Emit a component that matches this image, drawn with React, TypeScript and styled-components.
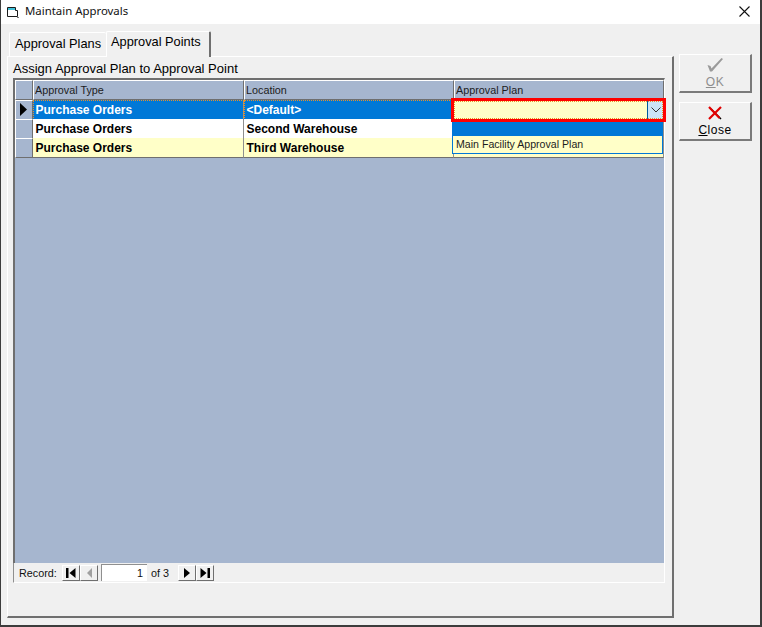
import React from 'react';
import styled, { createGlobalStyle } from 'styled-components';

const GlobalStyle = createGlobalStyle`
  html, body {
    margin: 0;
    padding: 0;
    background: #f0f0f0;
  }
`;

const Win = styled.div`
  box-sizing: border-box;
  width: 762px;
  height: 627px;
  display: flex;
  flex-direction: column;
  border-left: 1px solid #3c3c3c;
  border-right: 2px solid #3c3c3c;
  border-bottom: 2px solid #3c3c3c;
  background: #f0f0f0;
  font-family: "Liberation Sans", Arial, sans-serif;
  color: #000;
  overflow: hidden;
`;

const TitleBar = styled.div`
  height: 24px;
  flex: none;
  background: #fff;
  display: flex;
  align-items: center;
  padding-left: 5px;
  font-family: "Noto Sans", "Open Sans", sans-serif;
  font-size: 11.4px;
`;

const TitleText = styled.span`
  margin-left: 5px;
  margin-top: -3px;
  color: #111;
`;

const CloseX = styled.svg`
  margin-left: auto;
  margin-right: 10px;
  margin-top: -2px;
`;

const Body = styled.div`
  flex: 1;
  display: flex;
  padding: 7px 0 7px 6px;
  min-height: 0;
`;

const TabArea = styled.div`
  width: 667px;
  flex: none;
  display: flex;
  flex-direction: column;
`;

const TabRow = styled.div`
  height: 25px;
  flex: none;
  display: flex;
  align-items: flex-end;
  padding-left: 2px;
`;

const Tab = styled.div<{ $active?: boolean }>`
  box-sizing: border-box;
  font-size: 12.8px;
  height: ${p => (p.$active ? 26 : 24)}px;
  width: ${p => (p.$active ? 105 : 97)}px;
  padding: ${p => (p.$active ? '2px 0 0 4px' : '3px 0 0 5px')};
  border-top: 1px solid #fff;
  border-left: 1px solid #fff;
  border-right: ${p => (p.$active ? '2px solid #6f6f6f' : '0')};
  border-radius: 2px 2px 0 0;
  margin-bottom: ${p => (p.$active ? -1 : 0)}px;
  position: relative;
  background: #f0f0f0;
  white-space: nowrap;
`;

const TabPage = styled.div`
  box-sizing: border-box;
  flex: 1;
  border-top: 1px solid #fff;
  border-left: 1px solid #fff;
  border-right: 2px solid #6f6f6f;
  border-bottom: 2px solid #6f6f6f;
  padding: 4px 6px 0 5px;
  display: flex;
  flex-direction: column;
`;

const Caption = styled.div`
  font-size: 13px;
  line-height: 16px;
  height: 17px;
  white-space: nowrap;
`;

const GridFrame = styled.div`
  box-sizing: border-box;
  width: 652px;
  height: 485px;
  flex: none;
  background: #a6b6cf;
  border-top: 2px solid #6f6f6f;
  border-left: 2px solid #6f6f6f;
  border-right: 1px solid #fff;
  position: relative;
`;

const Row = styled.div`
  display: grid;
  grid-template-columns: 18px 211px 210px 1fr;
  height: 19px;
`;

const HeaderRow = styled(Row)`
  height: 20px;
`;

const HeadCell = styled.div`
  box-sizing: border-box;
  border-top: 1px solid #fff;
  border-left: 1px solid #fff;
  border-right: 1px solid #6f6f6f;
  border-bottom: 1px solid #6f6f6f;
  background: #a6b6cf;
  font-size: 10.8px;
  color: #1c1c1c;
  padding: 3px 0 0 1px;
  white-space: nowrap;
  overflow: hidden;
`;

const RowSelector = styled(HeadCell)`
  padding: 3px 0 0 4px;
`;

const Cell = styled.div<{ $bg: string; $fg?: string; $focus?: boolean }>`
  box-sizing: border-box;
  background: ${p => p.$bg};
  color: ${p => p.$fg ?? '#000'};
  font-size: 12px;
  font-weight: bold;
  line-height: 18px;
  padding: 1px 0 0 2.5px;
  border-right: 1px solid #8f8f8f;
  border-bottom: 1px solid ${p => (p.$focus ? '#e8902a' : '#6f6f6f')};
  white-space: nowrap;
  ${p => p.$focus && 'outline: 1px dotted #e8902a; outline-offset: -1px;'}
`;

const ComboBox = styled.div`
  box-sizing: border-box;
  position: absolute;
  left: 436px;
  top: 18px;
  width: 215px;
  height: 24px;
  border: 3px solid #ff0000;
  background: #ffffc8;
  display: flex;
  justify-content: flex-end;
  outline: 1px dotted #e8902a;
  outline-offset: -4px;
`;

const ComboArrow = styled.div`
  box-sizing: border-box;
  width: 16px;
  height: 18px;
  background: #cce4f7;
  border-left: 1px solid #005a9e;
  display: flex;
  align-items: center;
  justify-content: center;
`;

const DropList = styled.div`
  box-sizing: border-box;
  position: absolute;
  left: 437px;
  top: 42px;
  width: 211px;
  height: 32px;
  border-left: 1px solid #0078d7;
  border-right: 1px solid #0078d7;
  border-bottom: 1px solid #0078d7;
  background: #ffffc8;
`;

const DropSelected = styled.div`
  height: 14px;
  background: #0078d7;
`;

const DropItem = styled.div`
  font-size: 10.6px;
  color: #1c1c1c;
  line-height: 16px;
  padding-left: 3px;
  white-space: nowrap;
`;

const NavBar = styled.div`
  box-sizing: border-box;
  width: 652px;
  height: 20px;
  flex: none;
  border-left: 1px solid #8f8f8f;
  border-right: 1px solid #fff;
  border-bottom: 1px solid #fff;
  background: #f0f0f0;
  display: flex;
  align-items: center;
  padding-left: 5px;
  font-size: 10.8px;
  color: #111;
`;

const NavLabel = styled.span`
  width: 43px;
  flex: none;
`;

const NavButton = styled.div<{ $after?: number }>`
  box-sizing: border-box;
  width: 18px;
  height: 16px;
  margin-right: ${p => p.$after ?? 0}px;
  background: #f0f0f0;
  border-top: 1px solid #fff;
  border-left: 1px solid #fff;
  border-right: 1px solid #6f6f6f;
  border-bottom: 1px solid #6f6f6f;
  display: flex;
  align-items: center;
  justify-content: center;
`;

const RecordBox = styled.div`
  box-sizing: border-box;
  width: 46px;
  height: 17px;
  background: #fff;
  border-top: 1px solid #8f8f8f;
  border-left: 1px solid #8f8f8f;
  text-align: right;
  padding-right: 4px;
  line-height: 16px;
  font-size: 10.8px;
`;

const OfText = styled.span`
  width: 31px;
  flex: none;
  padding-left: 4px;
  box-sizing: border-box;
`;

const SideBar = styled.div`
  display: flex;
  flex-direction: column;
  gap: 9px;
  padding: 23px 0 0 5px;
`;

const CommandButton = styled.div<{ $disabled?: boolean }>`
  box-sizing: border-box;
  width: 73px;
  height: 39px;
  background: #f0f0f0;
  border-top: 1px solid #fff;
  border-left: 1px solid #fff;
  border-right: 2px solid #7a7a7a;
  border-bottom: 2px solid #7a7a7a;
  display: flex;
  flex-direction: column;
  align-items: center;
  font-size: 12px;
  line-height: 14px;
  letter-spacing: 0.5px;
  color: ${p => (p.$disabled ? '#8e8e8e' : '#000')};
  padding-top: 2px;
`;

const ButtonLabel = styled.span`
  margin-top: 2px;
`;

const Mnemonic = styled.span`
  text-decoration: underline;
`;

const columns = ['Approval Type', 'Location', 'Approval Plan'];

const rows = [
  { type: 'Purchase Orders', location: '<Default>', bg: '#0078d7', fg: '#fff', current: true },
  { type: 'Purchase Orders', location: 'Second Warehouse', bg: '#fff' },
  { type: 'Purchase Orders', location: 'Third Warehouse', bg: '#ffffc8' },
];

const navIcon = (d: string, fill = '#000') => (
  <svg width="10" height="10" viewBox="0 0 10 10"><path d={d} fill={fill} /></svg>
);

export default function App() {
  return (
    <>
      <GlobalStyle />
      <Win>
        <TitleBar>
          <svg width="14" height="14" viewBox="0 0 14 14" fill="none">
            <path d="M1.500 2.500h8v3h2v6h-10z" stroke="#1a1a1a" />
            <path d="M2 3h7v2H2z" fill="#3fc0d8" />
            <path d="M11 12.500h2" stroke="#777" />
          </svg>
          <TitleText>Maintain Approvals</TitleText>
          <CloseX width="11" height="11" viewBox="0 0 11 11">
            <path d="M.5.5l10 10M10.500.5l-10 10" stroke="#111" strokeWidth="1.1" />
          </CloseX>
        </TitleBar>
        <Body>
          <TabArea>
            <TabRow>
              <Tab>Approval Plans</Tab>
              <Tab $active>Approval Points</Tab>
            </TabRow>
            <TabPage>
              <Caption>Assign Approval Plan to Approval Point</Caption>
              <GridFrame>
                <HeaderRow>
                  <HeadCell />
                  {columns.map(c => <HeadCell key={c}>{c}</HeadCell>)}
                </HeaderRow>
                {rows.map((r, i) => (
                  <Row key={i}>
                    <RowSelector>
                      {r.current && (
                        <svg width="8" height="13" viewBox="0 0 8 13" style={{ display: 'block', marginTop: -1 }}>
                          <path d="M0 0l7 6.500L0 13z" fill="#000" />
                        </svg>
                      )}
                    </RowSelector>
                    <Cell $bg={r.bg} $fg={r.fg} $focus={r.current}>{r.type}</Cell>
                    <Cell $bg={r.bg} $fg={r.fg} $focus={r.current}>{r.location}</Cell>
                    <Cell $bg={r.current ? '#0078d7' : r.bg} />
                  </Row>
                ))}
                <ComboBox>
                  <ComboArrow>
                    <svg width="10" height="6" viewBox="0 0 10 6" fill="none">
                      <path d="M.5.5L5 5 9.500.5" stroke="#333" />
                    </svg>
                  </ComboArrow>
                </ComboBox>
                <DropList>
                  <DropSelected />
                  <DropItem>Main Facility Approval Plan</DropItem>
                </DropList>
              </GridFrame>
              <NavBar>
                <NavLabel>Record:</NavLabel>
                <NavButton>{navIcon('M0 0h2.500v10H0zM9.500 0v10L3.500 5z')}</NavButton>
                <NavButton $after={3}>{navIcon('M8 0v10L3 5z', '#a0a0a0')}</NavButton>
                <RecordBox>1</RecordBox>
                <OfText>of 3</OfText>
                <NavButton>{navIcon('M2 0v10l6-5z')}</NavButton>
                <NavButton>{navIcon('M.5 0v10l6-5zM7.500 0H10v10H7.500z')}</NavButton>
              </NavBar>
            </TabPage>
          </TabArea>
          <SideBar>
            <CommandButton $disabled>
              <svg width="18" height="16" viewBox="0 0 18 16" fill="none">
                <path d="M1.500 8l3 1 1 2.500L15.500 1 17 2 6 14.500H4z" fill="#9a9a9a" />
              </svg>
              <ButtonLabel><Mnemonic>O</Mnemonic>K</ButtonLabel>
            </CommandButton>
            <CommandButton>
              <svg width="16" height="16" viewBox="0 0 16 16" fill="none">
                <path d="M4 4l10 10" stroke="#000" strokeWidth="1.500" />
                <path d="M2 2l10.500 11M14 2L2 14" stroke="#e00000" strokeWidth="2.200" />
              </svg>
              <ButtonLabel><Mnemonic>C</Mnemonic>lose</ButtonLabel>
            </CommandButton>
          </SideBar>
        </Body>
      </Win>
    </>
  );
}
